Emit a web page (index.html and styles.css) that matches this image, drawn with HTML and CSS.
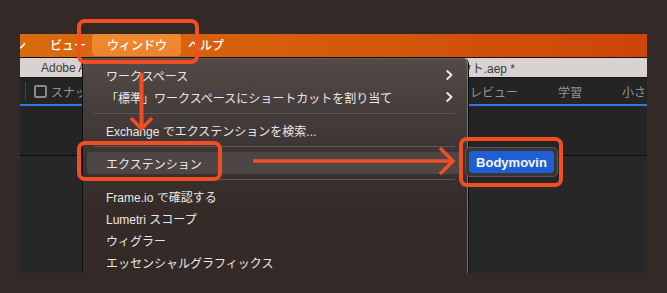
FILE: index.html
```html
<!DOCTYPE html>
<html lang="ja">
<head>
<meta charset="utf-8">
<title>ウィンドウ メニュー</title>
<link rel="stylesheet" href="styles.css">
</head>
<body>
<div class="app">
  <div class="menubar">
    <span class="mb-item mb-cut">ン</span>
    <span class="mb-item mb-view">ビュー</span>
    <span class="mb-item mb-active">ウィンドウ</span>
    <span class="mb-item mb-help">ヘルプ</span>
  </div>
  <div class="tabbar">
    <span class="tab-left">Adobe After Effects 2024</span>
    <span class="tab-right">プロジェクトレイアウト.aep *</span>
  </div>
  <div class="toolbar">
    <div class="tb-left">
      <span class="tb-sep"></span>
      <span class="checkbox"></span>
      <span class="tb-label">スナップ</span>
    </div>
    <div class="tb-right">
      <span class="tb-tab">レビュー</span>
      <span class="tb-tab">学習</span>
      <span class="tb-tab">小さい画面</span>
    </div>
  </div>
  <div class="blue-line"></div>
  <div class="panel-top"></div>
  <div class="panel-bottom"></div>

  <div class="menu">
    <div class="menu-row"><span>ワークスペース</span><svg class="chev" width="7" height="10" viewBox="0 0 7 10"><polyline points="1.2,1 5.5,5 1.2,9" fill="none" stroke="#ededed" stroke-width="1.8" stroke-linecap="round" stroke-linejoin="round"/></svg></div>
    <div class="menu-row"><span>「標準」ワークスペースにショートカットを割り当て</span><svg class="chev" width="7" height="10" viewBox="0 0 7 10"><polyline points="1.2,1 5.5,5 1.2,9" fill="none" stroke="#ededed" stroke-width="1.8" stroke-linecap="round" stroke-linejoin="round"/></svg></div>
    <div class="menu-sep"></div>
    <div class="menu-row"><span>Exchange でエクステンションを検索...</span></div>
    <div class="menu-sep"></div>
    <div class="menu-row is-hover"><span>エクステンション</span></div>
    <div class="menu-sep"></div>
    <div class="menu-row"><span>Frame.io で確認する</span></div>
    <div class="menu-row"><span>Lumetri スコープ</span></div>
    <div class="menu-row"><span>ウィグラー</span></div>
    <div class="menu-row"><span>エッセンシャルグラフィックス</span></div>
  </div>

  <div class="submenu">
    <div class="submenu-item">Bodymovin</div>
  </div>
</div>

<svg class="annot" width="667" height="293" viewBox="0 0 667 293">
  <g fill="none" stroke="#f24e24" stroke-width="4" stroke-linecap="butt" stroke-linejoin="miter">
    <rect x="79" y="21" width="118" height="41" rx="6"/>
    <rect x="79" y="143" width="141" height="36" rx="6"/>
    <rect x="461" y="139" width="100" height="46" rx="6"/>
    <line x1="141.5" y1="73" x2="141.5" y2="127"/>
    <polyline points="131,118 141.5,129 152,118" stroke-width="3.5"/>
    <line x1="253" y1="161" x2="451" y2="161" stroke-width="3.5"/>
    <polyline points="440,148 453,161 440,174" stroke-width="3.5"/>
  </g>
</svg>
</body>
</html>
```

FILE: styles.css
```css
* { box-sizing: border-box; }

html, body {
  margin: 0;
  width: 667px;
  height: 293px;
  overflow: hidden;
  background: #332a27;
}

body {
  position: relative;
  padding: 34px 20px 20px 20px;
  font-family: "Liberation Sans", "Noto Sans CJK JP", sans-serif;
}

.app {
  position: relative;
  width: 627px;
  height: 239px;
  overflow: hidden;
  display: flex;
  flex-direction: column;
  background: #272727;
}

/* menu bar */
.menubar {
  height: 24px;
  flex: none;
  display: flex;
  align-items: stretch;
  overflow: hidden;
  background: linear-gradient(90deg, #d86b0f 0%, #d55c0b 45%, #cd4508 100%);
  border-bottom: 1px solid #161110;
  font-family: "Noto Sans CJK JP", sans-serif;
  font-size: 12px;
  font-weight: 500;
  color: #ffffff;
}
.mb-item {
  display: flex;
  align-items: center;
  white-space: nowrap;
  line-height: 1;
  padding-bottom: 1px;
}
.mb-cut { margin-left: -6px; padding-right: 24px; }
.mb-view { padding-right: 6px; }
.mb-active {
  padding: 0 14px 1px 15px;
  margin-bottom: 1px;
  border-radius: 4px;
  background: linear-gradient(180deg, #f0892f 0%, #ec8430 100%);
}
.mb-help { margin-left: 7px; }

/* title tab bar */
.tabbar {
  height: 20px;
  flex: none;
  display: flex;
  align-items: center;
  justify-content: space-between;
  padding: 0 132px 0 21px;
  background: #d8d2d1;
  border-bottom: 1px solid #141414;
  font-size: 12px;
  color: #3c3a3a;
  white-space: nowrap;
}

/* toolbar */
.toolbar {
  height: 26px;
  flex: none;
  display: flex;
  align-items: center;
  background: #242424;
  font-family: "Noto Sans CJK JP", sans-serif;
  font-size: 12px;
  color: #959595;
  white-space: nowrap;
}
.tb-left {
  width: 450px;
  flex: none;
  display: flex;
  align-items: center;
}
.tb-sep {
  width: 1px;
  height: 18px;
  margin-left: 5px;
  background: #454545;
}
.checkbox {
  width: 13px;
  height: 13px;
  margin-left: 8px;
  border: 2px solid #8a8a8a;
  border-radius: 2px;
}
.tb-label { margin-left: 4px; }
.tb-right {
  display: flex;
  gap: 40px;
}

.blue-line {
  height: 2px;
  flex: none;
  background: #2a7ae0;
}
.panel-top {
  height: 50px;
  flex: none;
  background: #242424;
  border-bottom: 1px solid #0e0e0e;
}
.panel-bottom {
  flex: 1;
  background: #272727;
}

/* dropdown menu */
.menu {
  position: absolute;
  left: 62px;
  top: 24px;
  width: 386px;
  bottom: 0;
  padding-top: 5px;
  background: linear-gradient(180deg, #544b49 0%, #463e3c 22%, #3c3432 45%, #352c29 70%, #332a27 100%);
  border-left: 1px solid #101010;
  border-right: 1px solid #7a7270;
  border-top: 1px solid #625a58;
  border-top-right-radius: 6px;
  box-shadow: 1px 0 0 #0c0c0c;
  font-family: "Liberation Sans", "Noto Sans CJK JP", sans-serif;
  font-size: 12px;
  color: #ebe7e5;
}
.menu-row {
  height: 22px;
  margin: 0 4px;
  padding: 0 10px 0 19px;
  display: flex;
  align-items: center;
  justify-content: space-between;
  border-radius: 4px;
  white-space: nowrap;
}
.menu-row.is-hover {
  background: #4d4644;
}
.chev { flex: none; }
.menu-sep {
  height: 1px;
  margin: 5px 12px 5px 11px;
  background: #5e5654;
}

/* submenu */
.submenu {
  position: absolute;
  left: 445px;
  top: 113px;
  width: 93px;
  height: 30px;
  padding: 3px;
  background: #3b3634;
  border: 1px solid #5c5452;
  border-radius: 5px;
}
.submenu-item {
  height: 22px;
  display: flex;
  align-items: center;
  justify-content: center;
  border-radius: 4px;
  background: #1f5ed3;
  font-size: 13px;
  font-weight: bold;
  color: #f4f6fb;
}

/* annotations overlay */
.annot {
  position: absolute;
  left: 0;
  top: 0;
  pointer-events: none;
}
```
